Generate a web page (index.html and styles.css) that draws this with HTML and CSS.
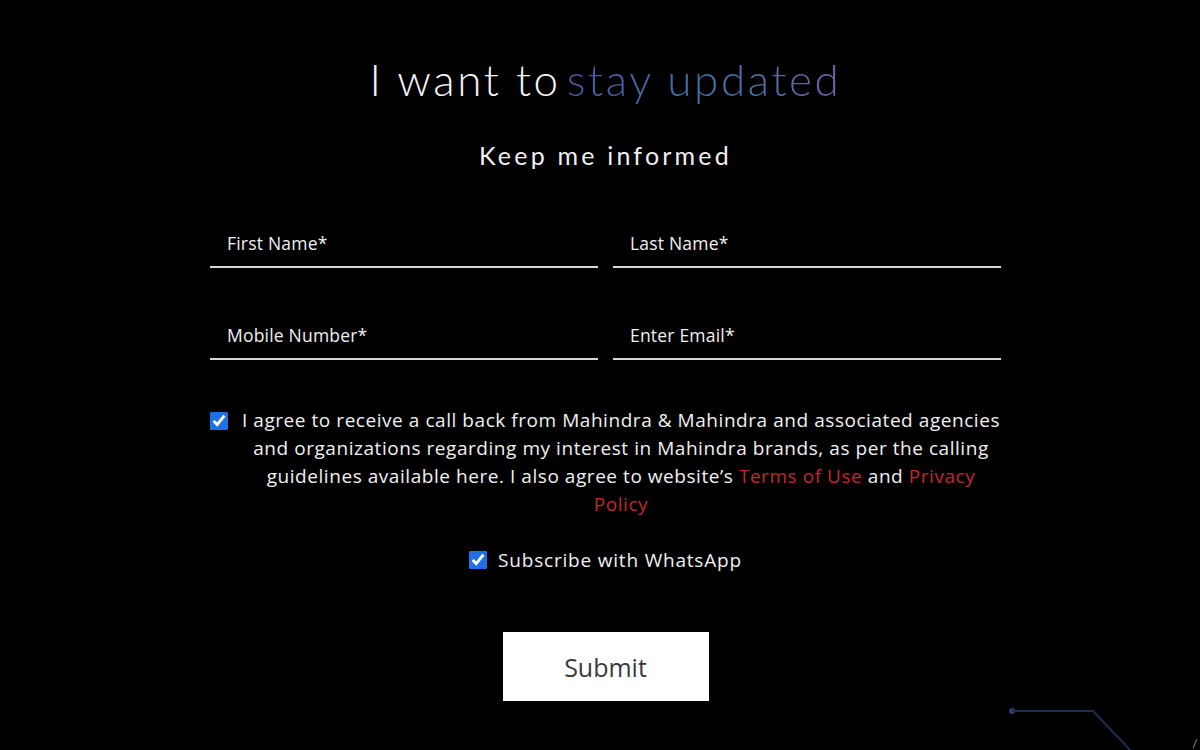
FILE: index.html
```html
<!DOCTYPE html>
<html lang="en">
<head>
<meta charset="utf-8">
<title>Stay updated</title>
<link rel="stylesheet" href="styles.css">
</head>
<body>
<main class="page">
  <section class="form-wrap">
    <h1 class="title"><span class="title-white">I want to</span><span class="title-grad">stay updated</span></h1>
    <h2 class="subtitle">Keep me informed</h2>
    <form class="form">
      <div class="grid">
        <label class="field"><input type="text" placeholder="First Name*"></label>
        <label class="field"><input type="text" placeholder="Last Name*"></label>
        <label class="field"><input type="text" placeholder="Mobile Number*"></label>
        <label class="field"><input type="email" placeholder="Enter Email*"></label>
      </div>
      <div class="consent">
        <input class="check" type="checkbox" checked>
        <p class="consent-text">I agree to receive a call back from Mahindra &amp; Mahindra and associated agencies<br>and organizations regarding my interest in Mahindra brands, as per the calling<br>guidelines available here. I also agree to website’s <a href="#" class="link">Terms of Use</a> and <a href="#" class="link">Privacy<br>Policy</a></p>
      </div>
      <div class="whatsapp">
        <input class="check" type="checkbox" checked>
        <span>Subscribe with WhatsApp</span>
      </div>
      <div class="actions">
        <button type="button" class="submit">Submit</button>
      </div>
    </form>
  </section>
  <svg class="deco" width="200" height="60" viewBox="0 0 200 60">
    <circle cx="12" cy="21" r="3" fill="#2b3f6e"/>
    <polyline points="12,21 93,21 132,62" fill="none" stroke="#1f2d52" stroke-width="2"/>
    <path d="M193,58 L197,49" stroke="#6a6a6a" stroke-width="1.2" fill="none"/>
  </svg>
</main>
</body>
</html>
```

FILE: styles.css
```css
* { box-sizing: border-box; }
html, body {
  margin: 0;
  padding: 0;
  background: #000;
  height: 100%;
  overflow: hidden;
}
body {
  font-family: "Open Sans", "Liberation Sans", sans-serif;
  color: #f2f2f2;
}
.page {
  position: relative;
  width: 1200px;
  height: 750px;
}
.form-wrap {
  width: 791px;
  margin-left: 210px;
  padding-top: 52px;
  display: flex;
  flex-direction: column;
  align-items: center;
}
.title {
  margin: 0;
  font-family: "Lato", "Open Sans", sans-serif;
  font-weight: 300;
  font-size: 44px;
  line-height: 54px;
  letter-spacing: 2.6px;
  display: flex;
  gap: 6px;
}
.title-white { color: #f4f4f4; }
.title-grad {
  background: linear-gradient(90deg, #4a55a0 0%, #3e70a6 45%, #4c6ea4 70%, #7a58a8 100%);
  -webkit-background-clip: text;
  background-clip: text;
  color: transparent;
}
.subtitle {
  margin: 34px 0 0;
  font-family: "Lato", "Open Sans", sans-serif;
  font-weight: 400;
  font-size: 25px;
  line-height: 30px;
  letter-spacing: 3.2px;
  color: #f0f0f0;
}
.form {
  width: 100%;
  margin-top: 50px;
  display: flex;
  flex-direction: column;
}
.grid {
  display: grid;
  grid-template-columns: 388px 388px;
  column-gap: 15px;
  row-gap: 44px;
}
.field {
  display: block;
  border-bottom: 2px solid #d8d8d8;
  height: 48px;
}
.field input {
  width: 100%;
  height: 46px;
  padding: 0 17px;
  background: transparent;
  border: 0;
  outline: none;
  color: #fff;
  font-family: "Open Sans", sans-serif;
  font-weight: 500;
  font-size: 17.5px;
  letter-spacing: 0.2px;
}
.field input::placeholder { color: #f0f0f0; opacity: 1; }
.check {
  appearance: auto;
  accent-color: #1f6fe6;
  width: 18px;
  height: 18px;
  margin: 0;
  flex: none;
}
.consent {
  margin-top: 46px;
  display: flex;
  align-items: flex-start;
  gap: 13px;
}
.consent .check { margin-top: 6px; }
.consent-text {
  margin: 0;
  width: 760px;
  white-space: nowrap;
  text-align: center;
  font-family: "Open Sans", sans-serif;
  font-size: 19px;
  line-height: 28px;
  letter-spacing: 0.55px;
  color: #f0f0f0;
}
.link {
  color: #c0282d;
  text-decoration: none;
}
.whatsapp {
  margin-top: 28px;
  height: 28px;
  display: flex;
  align-items: center;
  justify-content: center;
  gap: 11px;
  font-family: "Open Sans", sans-serif;
  font-size: 19px;
  letter-spacing: 0.8px;
  color: #f0f0f0;
}
.actions {
  margin-top: 58px;
  display: flex;
  justify-content: center;
}
.submit {
  width: 206px;
  height: 69px;
  background: #fff;
  border: 0;
  font-family: "Open Sans", sans-serif;
  font-size: 25px;
  color: #3a3a3a;
  cursor: pointer;
}
.deco {
  position: absolute;
  left: 1000px;
  top: 690px;
}
```
